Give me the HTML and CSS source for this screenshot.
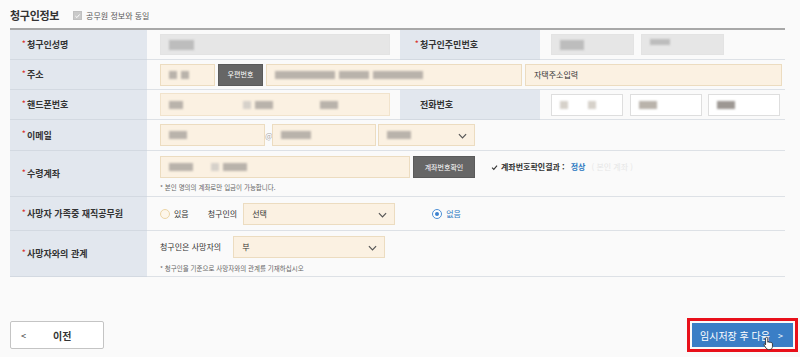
FILE: index.html
```html
<!DOCTYPE html>
<html lang="ko">
<head>
<meta charset="utf-8">
<title>청구인정보</title>
<link rel="stylesheet" href="styles.css">
</head>
<body>
<div class="page">
  <div class="head">
    <h2 class="title">청구인정보</h2>
    <label class="same"><span class="cb"><svg viewBox="0 0 10 10" width="9" height="9"><path d="M2 5.2 L4.2 7.2 L8 2.8" fill="none" stroke="#fff" stroke-width="1.4"/></svg></span>공무원 정보와 동일</label>
  </div>

  <div class="form">
    <!-- row 1 -->
    <div class="th r1"><span class="req">*</span>청구인성명</div>
    <div class="td r1">
      <div class="inp dis w230"><span class="bl g b25"></span></div>
    </div>
    <div class="th th2 r1"><span class="req">*</span>청구인주민번호</div>
    <div class="td td2 r1 gap7">
      <div class="inp dis w83"><span class="bl g b24"></span></div>
      <div class="inp dis w83"><span class="bl g b20 up"></span></div>
    </div>

    <!-- row 2 -->
    <div class="th r2"><span class="req">*</span>주소</div>
    <div class="td span3 r2 gap3">
      <div class="inp w55"><span class="bl b8"></span><span class="bl b8"></span></div>
      <button class="btn-dark w45">우편번호</button>
      <div class="inp w256"><span class="bl b60"></span><span class="bl b30"></span><span class="bl b50"></span></div>
      <div class="inp w257"><span class="ph">자택주소입력</span></div>
    </div>

    <!-- row 3 -->
    <div class="th r3"><span class="req">*</span>핸드폰번호</div>
    <div class="td r3">
      <div class="phone">
        <div class="inp flat w74"><span class="bl b14"></span></div>
        <div class="inp flat w77"><span class="bl lt b8"></span><span class="bl b18"></span></div>
        <div class="inp flat w77"><span class="bl b18"></span></div>
      </div>
    </div>
    <div class="th th2 r3"><span class="req blank">*</span>전화번호</div>
    <div class="td td2 r3 tel">
      <div class="inp white w72"><span class="bl lt b8"></span><span class="sp"></span><span class="bl lt b8"></span></div>
      <div class="inp white w72"><span class="bl b18"></span></div>
      <div class="inp white w72"><span class="bl b18 dk"></span></div>
    </div>

    <!-- row 4 -->
    <div class="th r4"><span class="req">*</span>이메일</div>
    <div class="td span3 r4">
      <div class="inp w105"><span class="bl b18"></span></div>
      <span class="at">@</span>
      <div class="inp w104"><span class="bl b30"></span></div>
      <div class="inp sel w97"><span class="bl b24"></span><svg class="chev" viewBox="0 0 10 6" width="9" height="6"><path d="M1 1 L5 5 L9 1" fill="none" stroke="#555" stroke-width="1.3"/></svg></div>
    </div>

    <!-- row 5 -->
    <div class="th r5"><span class="req">*</span>수령계좌</div>
    <div class="td span3 r5 col">
      <div class="line gap3">
        <div class="inp w250"><span class="bl b24"></span><span class="bl lt b8 ml"></span><span class="bl b24"></span></div>
        <button class="btn-dark w62">계좌번호확인</button>
        <span class="result"><svg viewBox="0 0 10 10" width="7" height="7"><path d="M1.5 5.2 L4 7.6 L8.6 2.4" fill="none" stroke="#333" stroke-width="1.6"/></svg>계좌번호확인결과 : <em>정상</em><span class="faded">( 본인 계좌 )</span></span>
      </div>
      <p class="note">* 본인 명의의 계좌로만 입금이 가능합니다.</p>
    </div>

    <!-- row 6 -->
    <div class="th r6"><span class="req">*</span>사망자 가족중 재직공무원</div>
    <div class="td span3 r6">
      <label class="radio"><span class="dot"></span>있음</label>
      <span class="txt who">청구인의</span>
      <div class="inp sel w152"><span class="val">선택</span><svg class="chev" viewBox="0 0 10 6" width="9" height="6"><path d="M1 1 L5 5 L9 1" fill="none" stroke="#555" stroke-width="1.3"/></svg></div>
      <label class="radio on"><span class="dot"></span>없음</label>
    </div>

    <!-- row 7 -->
    <div class="th r7"><span class="req">*</span>사망자와의 관계</div>
    <div class="td span3 r7 col">
      <div class="line">
        <span class="txt rel">청구인은 사망자의</span>
        <div class="inp sel w152"><span class="val">부</span><svg class="chev" viewBox="0 0 10 6" width="9" height="6"><path d="M1 1 L5 5 L9 1" fill="none" stroke="#555" stroke-width="1.3"/></svg></div>
      </div>
      <p class="note">* 청구인을 기준으로 사망자와의 관계를 기재하십시오</p>
    </div>
  </div>

  <div class="actions">
    <button class="btn-prev"><span class="lt-arrow">&lt;</span><span>이전</span></button>
    <div class="next-wrap">
      <button class="btn-next">임시저장 후 다음<span class="gt">&gt;</span></button>
      <svg class="cursor" viewBox="0 0 12 16" width="11" height="15"><path d="M4 1.2 C4.9 1.2 5.2 1.8 5.2 2.6 L5.2 6.6 C5.6 6.2 6.6 6.2 7 6.8 C7.5 6.4 8.4 6.5 8.7 7.2 C9.2 6.9 10.3 7.1 10.3 8.2 L10.3 11.2 C10.3 13 9.4 14.6 7.6 14.6 L6 14.6 C4.8 14.6 4 14 3.3 13 L1.2 9.8 C0.8 9.2 1.2 8.4 2 8.6 L2.8 9.4 L2.8 2.6 C2.8 1.8 3.2 1.2 4 1.2 Z" fill="#fff" stroke="#222" stroke-width="0.9"/></svg>
    </div>
  </div>
</div>
</body>
</html>
```

FILE: styles.css
```css
* { box-sizing: border-box; }
html, body { margin: 0; padding: 0; }
body {
  background: #fafafa;
  font-family: "Noto Sans CJK KR", "Noto Sans", sans-serif;
  color: #333;
  width: 800px;
  height: 357px;
  overflow: hidden;
}
.page { padding: 0 15px 0 10px; }

.head {
  height: 28px;
  display: flex;
  align-items: center;
  padding-top: 3px;
}
.title {
  margin: 0;
  font-size: 11px;
  font-weight: 700;
  color: #333;
  line-height: 1;
  letter-spacing: -0.3px;
}
.same {
  display: flex;
  align-items: center;
  margin-left: 14px;
  font-size: 8px;
  color: #555;
  line-height: 1;
}
.cb {
  width: 9px; height: 9px;
  background: #c9c9c9;
  border: 1px solid #c0c0c0;
  display: inline-flex; align-items: center; justify-content: center;
  margin-right: 4px;
}
.cb svg { width: 8px; height: 8px; }

.form {
  display: grid;
  grid-template-columns: 137px 253px 140px 245px;
  grid-template-rows: 30px 30px 30px 31px 46px 34px 46px;
  border-top: 2px solid #a8a8a8;
}
.th, .td {
  border-bottom: 1px solid #dde1e6;
  display: flex;
  align-items: center;
}
.th {
  background: #e2e7ee;
  padding-left: 12px;
  font-size: 9px;
  font-weight: 700;
  color: #333;
  line-height: 1;
  border-bottom-color: #d3d9e1;
}
.th2 { padding-left: 15px; }
.req {
  color: #d9302c;
  width: 5px;
  font-size: 7px;
  margin-top: -3px;
}
.req.blank { visibility: hidden; }
.td { padding-left: 13px; }
.td2 { padding-left: 11px; }
.span3 { grid-column: span 3; }
.gap3 { gap: 3px; }
.gap7 { gap: 7px; }
.col { flex-direction: column; align-items: flex-start; justify-content: center; }
.line { display: flex; align-items: center; }

.inp {
  height: 22px;
  border: 1px solid #ecdcc0;
  background: #fbf1e2;
  display: flex;
  align-items: center;
  padding-left: 8px;
  gap: 4px;
  flex: none;
  position: relative;
}
.inp.dis { background: #e6e6e6; border-color: #e3e3e3; height: 21px; }
.inp.white { background: #fff; border-color: #dedede; }
.inp.flat { border: none; height: 20px; background: transparent; }
.w55 { width: 55px; } .w45 { width: 45px; } .w62 { width: 62px; }
.w72 { width: 72px; } .w74 { width: 74px; } .w77 { width: 77px; } .w79 { width: 79px; }
.w83 { width: 83px; } .w97 { width: 97px; } .w104 { width: 104px; } .w105 { width: 105px; }
.w152 { width: 152px; } .w230 { width: 230px; } .w250 { width: 250px; }
.w256 { width: 256px; } .w257 { width: 257px; }

.bl {
  display: inline-block;
  height: 8px;
  background: #b9b3ab;
  filter: blur(1px);
  flex: none;
}
.bl.g { background: #bdbdbd; height: 10px; }
.bl.lt { background: #d6d1ca; }
.bl.dk { background: #9d9893; }
.bl.up { margin-top: -6px; height: 6px; }
.b8 { width: 8px; } .b14 { width: 14px; } .b18 { width: 18px; } .b20 { width: 20px; }
.b24 { width: 24px; } .b25 { width: 25px; } .b30 { width: 30px; } .b50 { width: 50px; } .b60 { width: 60px; }
.ml { margin-left: 14px; }
.sp { width: 12px; }

.phone {
  display: flex;
  width: 230px;
  height: 23px;
  align-items: center;
  background: #fbf1e2;
  border: 1px solid #f1e3cc;
}
.tel { gap: 6px; }
.tel .inp:first-child { margin-right: 1px; }

.ph, .val {
  font-size: 8px;
  color: #333;
  line-height: 1;
}
.at {
  width: 7px;
  font-size: 8px;
  color: #aaa;
  text-align: center;
}
.sel { margin-left: 2px; }
.chev { position: absolute; right: 7px; top: 8px; }

.btn-dark {
  height: 22px;
  background: #666;
  border: 1px solid #5a5a5a;
  color: #fff;
  font-family: inherit;
  font-size: 7px;
  padding: 0;
  line-height: 1;
}
.result {
  margin-left: 13px;
  font-size: 8px;
  font-weight: 700;
  color: #333;
  display: flex;
  align-items: center;
  gap: 3px;
  line-height: 1;
}
.result em { font-style: normal; color: #2f7bc2; margin-left: 3px; }
.faded { color: #e6e6e6; font-weight: 400; margin-left: 3px; }
.note {
  margin: 4px 0 0;
  font-size: 6.5px;
  color: #666;
  line-height: 1;
}

.radio {
  display: flex;
  align-items: center;
  font-size: 8px;
  color: #333;
  line-height: 1;
}
.radio .dot {
  width: 10px; height: 10px;
  border-radius: 50%;
  border: 1px solid #ecd5a6;
  background: #fdf6ea;
  margin-right: 4px;
  position: relative;
}
.radio.on { margin-left: 37px; color: #2f7bc2; }
.radio.on .dot { border-color: #4c8fd6; background: #fff; }
.radio.on .dot::after {
  content: "";
  position: absolute;
  left: 2px; top: 2px;
  width: 4px; height: 4px;
  border-radius: 50%;
  background: #3d82cf;
}
.txt { font-size: 8px; color: #333; line-height: 1; }
.who { margin-left: 19px; margin-right: 4px; }
.rel { margin-right: 12px; }
.r7 .sel { margin-left: 0; }
.r7 .note { margin-top: 7px; }
.r5 .note { margin-top: 6px; }

.actions {
  display: flex;
  justify-content: space-between;
  align-items: center;
  margin-top: 44px;
  margin-right: -8px;
}
.btn-prev {
  width: 94px;
  height: 28px;
  background: #fff;
  border: 1px solid #c4c4c4;
  border-radius: 2px;
  display: flex;
  align-items: center;
  padding: 0 0 0 10px;
  font-family: inherit;
  font-size: 10px;
  font-weight: 700;
  color: #333;
}
.lt-arrow { font-size: 9px; font-weight: 400; width: 32px; text-align: left; }
.next-wrap { position: relative; }
.btn-next {
  width: 101px;
  height: 24px;
  background: #3a7ec6;
  border: none;
  color: #fff;
  font-family: inherit;
  font-size: 10px;
  display: flex;
  align-items: center;
  justify-content: flex-start;
  padding: 0 0 0 8px;
  outline: 3px solid #e8101a;
  outline-offset: 2px;
}
.gt { margin-left: 8px; font-size: 9px; }
.cursor { position: absolute; left: 71px; top: 13px; }
```
